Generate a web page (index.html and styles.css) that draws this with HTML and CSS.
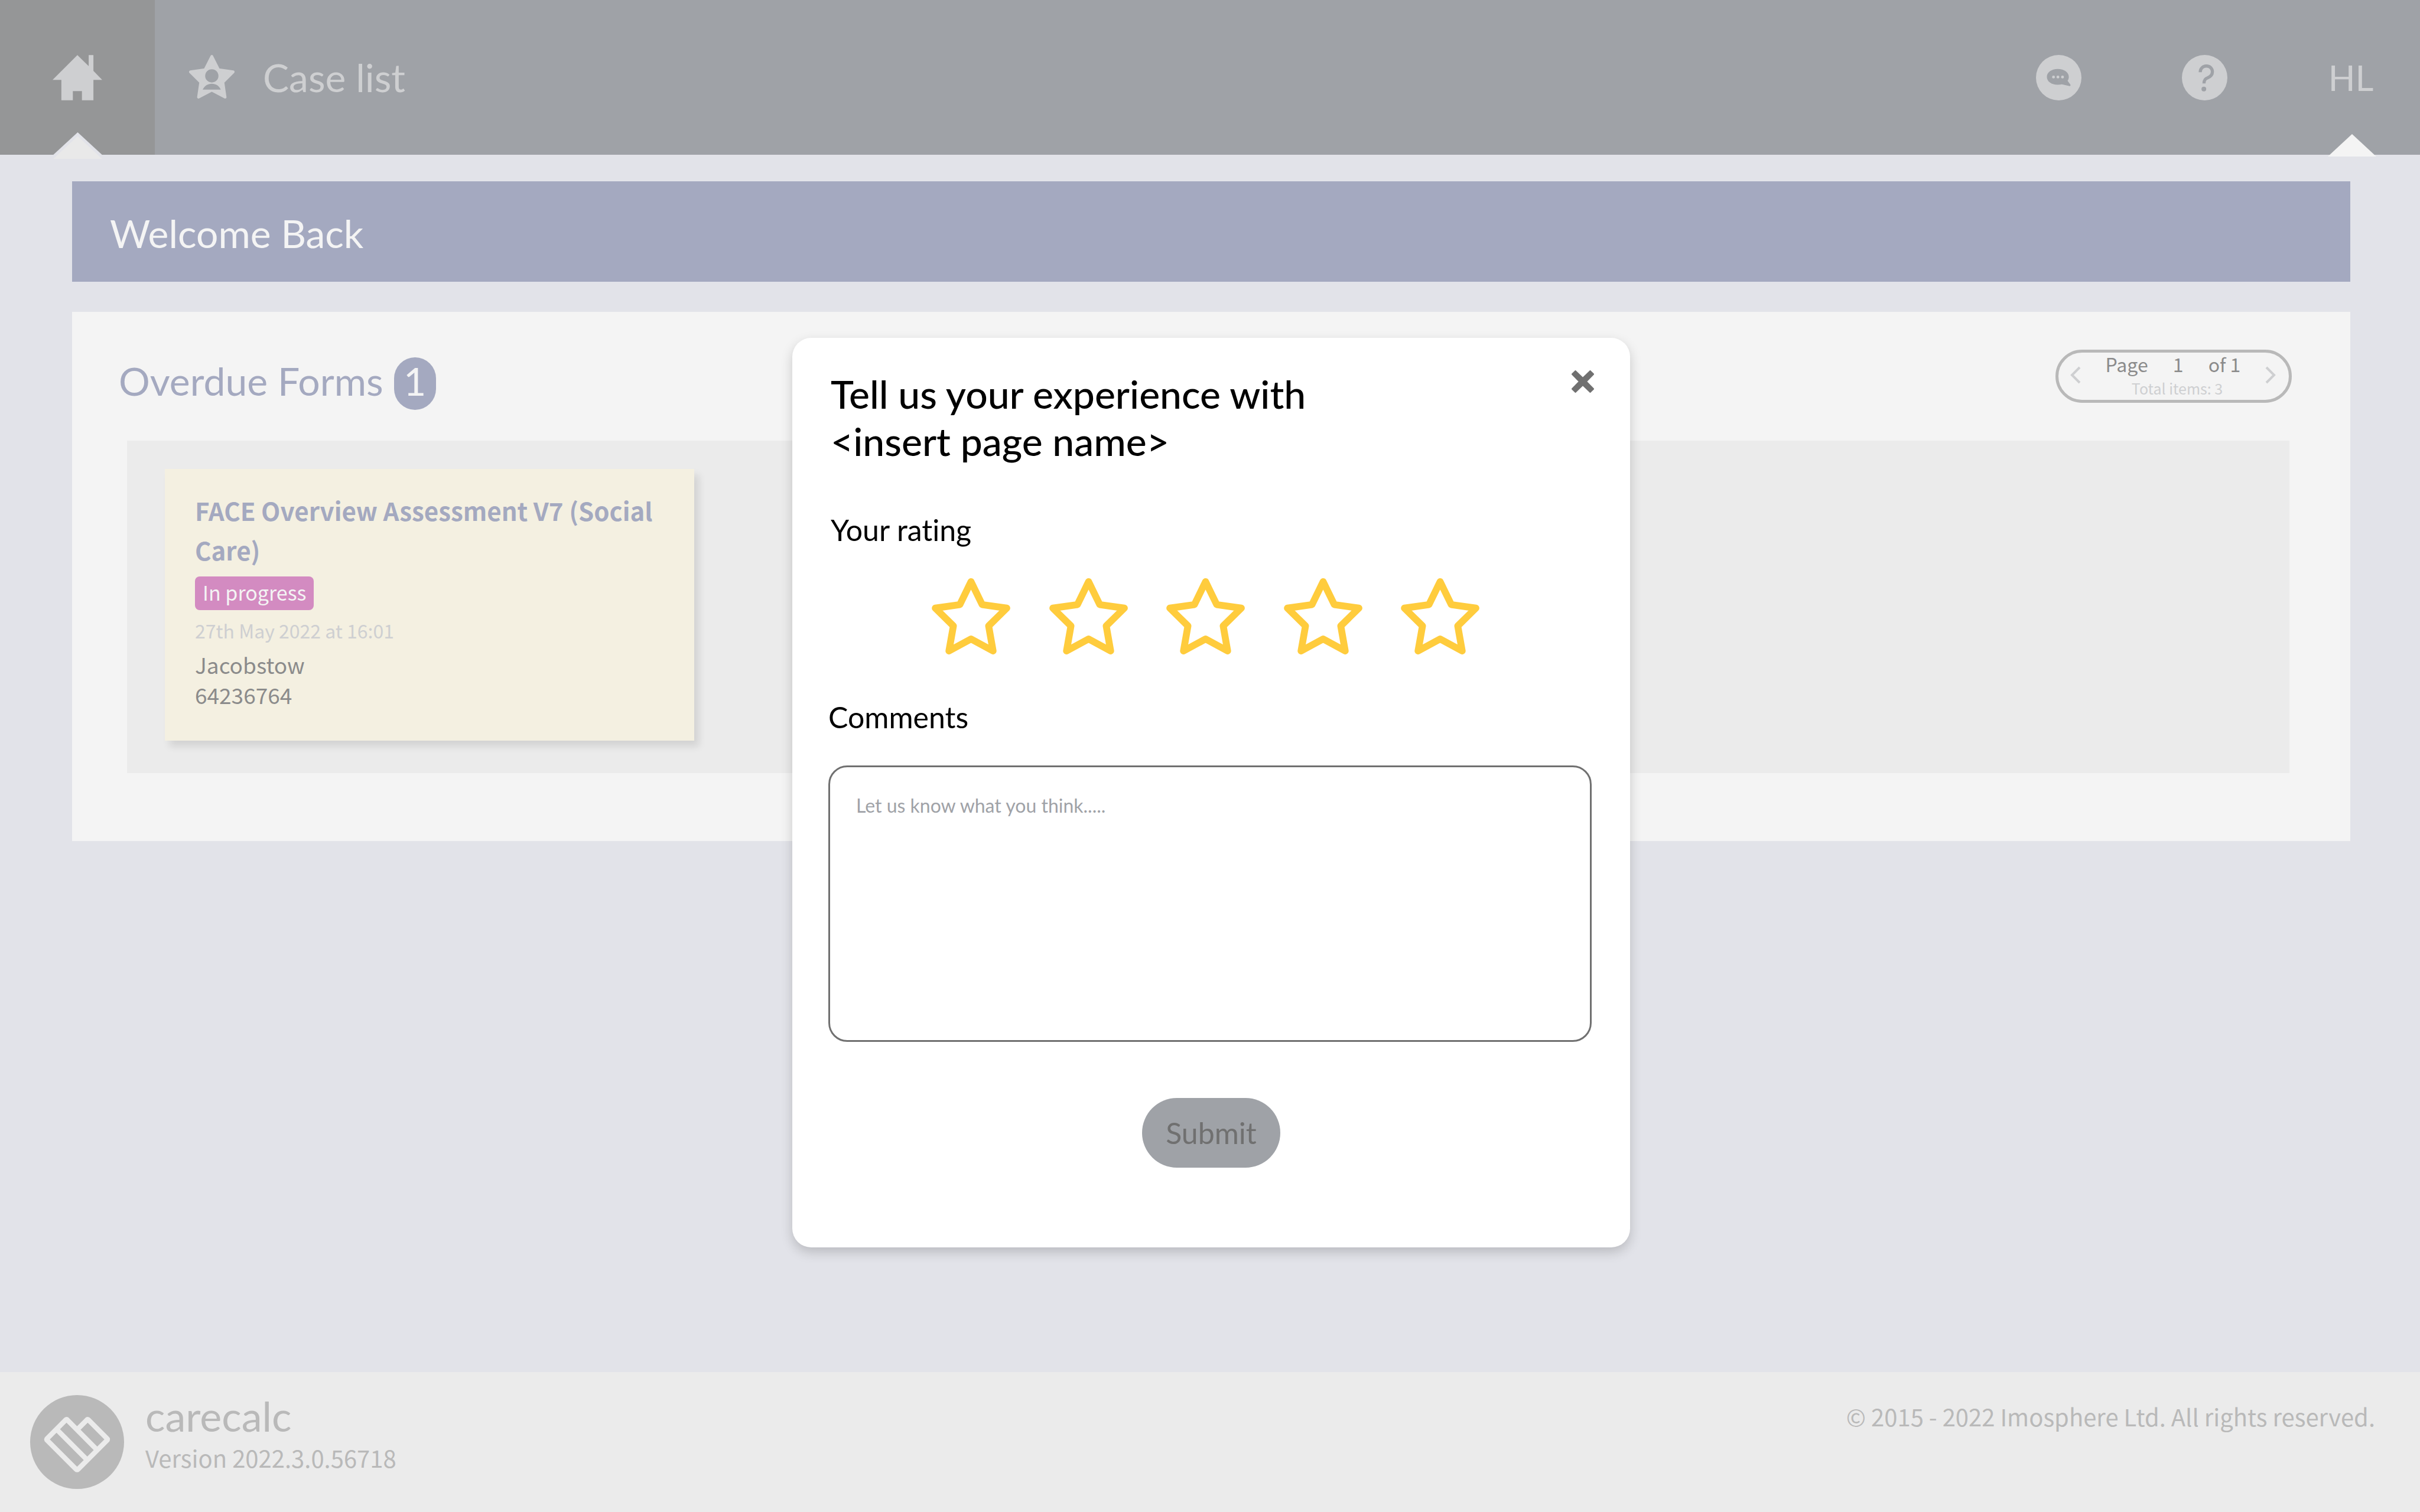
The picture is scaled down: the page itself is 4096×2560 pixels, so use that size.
FILE: index.html
```html
<!DOCTYPE html>
<html lang="en">
<head>
<meta charset="utf-8">
<title>carecalc</title>
<link rel="stylesheet" href="styles.css">
</head>
<body>
<div class="page">
  <header class="topbar">
    <a class="home" href="#" aria-label="Home">
      <svg class="home-icon" viewBox="94 78 316 288" aria-hidden="true"><path d="M94 236 252 78l72 71V78h30v101l56 57h-56v130h-73v-58h-58v58h-73V236z"/></svg>
      <svg class="home-pointer" viewBox="97 570 310 168" aria-hidden="true"><path fill="#e2e3e9" d="M252 570 407 713v25H97v-25z"/><path fill="#e9e9e9" d="M252 594 407 738H97z"/></svg>
    </a>
    <a class="case-list" href="#">
      <svg class="case-icon" viewBox="960 90 288 276" aria-hidden="true">
        <path class="case-star" d="M1104 99 1147 184 1239 197 1174 262 1188 357 1104 313 1020 357 1034 262 969 197 1061 184z"/>
        <circle class="cutout" cx="1104" cy="222" r="42"/>
        <path class="cutout" d="M1046 309C1058 285 1078 272 1104 272S1150 285 1161 309z"/>
      </svg>
      <span>Case list</span>
    </a>
    <nav class="tools">
      <button class="tool" type="button" aria-label="Messages">
        <svg class="tool-icon" viewBox="84 78 288 288" aria-hidden="true">
          <circle cx="228" cy="222" r="144"/>
          <path class="cutout" d="M222 167C262 167 292 188 292 217 292 226 289 235 284 242L302 266C304 271 302 276 297 275L248 264C240 266 231 267 222 267 183 267 153 246 153 217S183 167 222 167z"/>
          <circle cx="195" cy="218" r="9"/><circle cx="223" cy="218" r="9"/><circle cx="252" cy="218" r="9"/>
        </svg>
      </button>
      <button class="tool" type="button" aria-label="Help">
        <svg class="tool-icon" viewBox="1008 78 288 288" aria-hidden="true">
          <circle cx="1152" cy="222" r="144"/>
          <path class="help-hook" d="M1124 187C1124 164 1142 148 1163 148 1186 148 1201 164 1201 185 1201 206 1187 217 1171 223 1155 228 1148 238 1148 258"/>
          <circle class="cutout" cx="1147" cy="294" r="15"/>
        </svg>
      </button>
      <a class="user" href="#">HL
        <svg class="user-pointer" viewBox="0 0 82 38" aria-hidden="true"><path d="M41 0 82 38H0z"/></svg>
      </a>
    </nav>
  </header>

  <main class="content">
    <h1 class="banner">Welcome Back</h1>
    <section class="panel">
      <div class="panel-head">
        <h2 class="panel-title">Overdue Forms <span class="count">1</span></h2>
        <div class="pager">
          <button class="pager-step" type="button" aria-label="Previous page"><svg class="chevron" viewBox="0 0 18 30" aria-hidden="true"><path d="M16 2 3 15l13 13"/></svg></button>
          <div class="pager-info">
            <div class="pager-page">
              <label for="page-number">Page</label>
              <input class="page-number" id="page-number" type="text" value="1">
              <span>of 1</span>
            </div>
            <div class="pager-total">Total items: 3</div>
          </div>
          <button class="pager-step" type="button" aria-label="Next page"><svg class="chevron" viewBox="0 0 18 30" aria-hidden="true"><path d="M2 2l13 13L2 28"/></svg></button>
        </div>
      </div>
      <div class="forms">
        <article class="card">
          <h3 class="card-title">FACE Overview Assessment V7 (Social Care)</h3>
          <span class="status">In progress</span>
          <p class="card-date">27th May 2022 at 16:01</p>
          <p class="card-text">Jacobstow</p>
          <p class="card-text">64236764</p>
        </article>
      </div>
    </section>
  </main>

  <footer class="footer">
    <svg class="logo" viewBox="72 66 598 598" aria-hidden="true">
      <circle cx="371" cy="365" r="299" fill="#b9b9b9"/>
      <path class="logo-line" d="M491 408 310 226Q304 216 297 226L181 342Q173 348 181 355L364 538Q371 546 378 538L561 355Q568 348 561 342L445 226Q438 216 432 226L382 276M248 292 427 471"/>
    </svg>
    <div class="product">
      <div class="product-name">carecalc</div>
      <div class="footer-text">Version 2022.3.0.56718</div>
    </div>
    <div class="footer-text copyright">© 2015 - 2022 Imosphere Ltd. All rights reserved.</div>
  </footer>
</div>

<div class="overlay">
  <form class="dialog" role="dialog" aria-labelledby="dialog-title">
    <div class="dialog-head">
      <h2 class="dialog-title" id="dialog-title">Tell us your experience with<br>&lt;insert page name&gt;</h2>
      <button class="close" type="button" aria-label="Close"><svg class="close-icon" viewBox="78 72 140 140" aria-hidden="true"><path d="M102 77 148 122 194 77 213 96 168 142 213 188 194 207 148 162 102 207 83 188 128 142 83 96z"/></svg></button>
    </div>
    <fieldset class="rating">
      <legend class="field-label rating-label">Your rating</legend>
      <div class="stars">
        <label class="star"><input class="star-input" type="radio" name="rating" value="1" aria-label="1 star"><svg class="star-icon" viewBox="63 71 498 484" aria-hidden="true"><path d="M312 93 383 239 539 261 424 374 452 533 312 457 172 533 200 374 85 261 241 239z"/></svg></label>
        <label class="star"><input class="star-input" type="radio" name="rating" value="2" aria-label="2 stars"><svg class="star-icon" viewBox="63 71 498 484" aria-hidden="true"><path d="M312 93 383 239 539 261 424 374 452 533 312 457 172 533 200 374 85 261 241 239z"/></svg></label>
        <label class="star"><input class="star-input" type="radio" name="rating" value="3" aria-label="3 stars"><svg class="star-icon" viewBox="63 71 498 484" aria-hidden="true"><path d="M312 93 383 239 539 261 424 374 452 533 312 457 172 533 200 374 85 261 241 239z"/></svg></label>
        <label class="star"><input class="star-input" type="radio" name="rating" value="4" aria-label="4 stars"><svg class="star-icon" viewBox="63 71 498 484" aria-hidden="true"><path d="M312 93 383 239 539 261 424 374 452 533 312 457 172 533 200 374 85 261 241 239z"/></svg></label>
        <label class="star"><input class="star-input" type="radio" name="rating" value="5" aria-label="5 stars"><svg class="star-icon" viewBox="63 71 498 484" aria-hidden="true"><path d="M312 93 383 239 539 261 424 374 452 533 312 457 172 533 200 374 85 261 241 239z"/></svg></label>
      </div>
    </fieldset>
    <label class="field-label" for="comments">Comments</label>
    <textarea class="comments" id="comments" placeholder="Let us know what you think....."></textarea>
    <button class="submit" type="submit">Submit</button>
  </form>
</div>
</body>
</html>
```
FILE: styles.css
```css
* {
  box-sizing: border-box;
}

body {
  margin: 0;
  background: #e2e3e9;
  font-family: "Noto Sans CJK SC", "Noto Sans", sans-serif;
  font-variant-ligatures: none;
  color: #8b8b8b;
}

h1, h2, h3, p {
  margin: 0;
  font-weight: 400;
}

a {
  color: inherit;
  text-decoration: none;
}

button {
  margin: 0;
  padding: 0;
  border: 0;
  background: none;
  font: inherit;
  color: inherit;
}

svg {
  display: block;
}

.page {
  display: flex;
  flex-direction: column;
  min-height: 100vh;
}

/* Top bar */
.topbar {
  display: flex;
  height: 262px;
  background: #9fa2a7;
  color: #cecfd1;
  fill: #cecfd1;
  font-family: Lato, sans-serif;
  font-size: 66px;
}

.home {
  position: relative;
  display: flex;
  align-items: center;
  justify-content: center;
  width: 262px;
  background: #959697;
}

.home-icon {
  width: 84px;
  height: 77px;
}

.home-pointer {
  position: absolute;
  left: 90px;
  bottom: -7px;
  width: 83px;
  height: 45px;
}

.case-list {
  display: flex;
  align-items: center;
  gap: 48px;
  padding: 0 0 2px 58px;
}

.case-icon {
  width: 77px;
  height: 74px;
}

.case-star {
  stroke: #cecfd1;
  stroke-width: 18;
  stroke-linejoin: round;
}

.cutout {
  fill: #9fa2a7;
}

.tools {
  display: flex;
  align-items: center;
  margin-left: auto;
  padding-right: 74px;
}

.tool {
  margin-right: 170px;
}

.tool-icon {
  width: 77px;
  height: 77px;
}

.help-hook {
  fill: none;
  stroke: #9fa2a7;
  stroke-width: 20;
}

.user {
  position: relative;
  display: flex;
  align-items: center;
  justify-content: center;
  width: 82px;
  height: 100%;
  padding-right: 4px;
  font-size: 60px;
}

.user-pointer {
  position: absolute;
  left: 0;
  bottom: -3px;
  width: 82px;
  height: 38px;
  fill: #f4f4f4;
}

/* Main content */
.content {
  flex: 1;
  padding: 45px 118px 60px 122px;
}

.banner {
  padding: 48px 64px 42px;
  background: #a4a9c0;
  color: #f4f4f4;
  font-family: Lato, sans-serif;
  font-size: 66px;
  line-height: 80px;
}

.panel {
  margin-top: 51px;
  padding: 64px 103px 115px 93px;
  background: #f4f4f4;
}

.panel-head {
  display: flex;
  justify-content: space-between;
  margin: 0 -4px 52px -14px;
}

.panel-title {
  display: flex;
  gap: 18px;
  padding-top: 13px;
  color: #a4a9c0;
  font-family: Lato, sans-serif;
  font-size: 66px;
  line-height: 80px;
}

.count {
  width: 71px;
  height: 89px;
  border-radius: 36px;
  background: #a4a9c0;
  color: #f4f4f4;
  text-align: center;
}

.pager {
  display: flex;
  align-items: center;
  justify-content: space-between;
  width: 400px;
  height: 90px;
  padding: 0 22px 5px 20px;
  border: 5px solid #b9b9b9;
  border-radius: 45px;
}

.chevron {
  width: 18px;
  height: 30px;
  fill: none;
  stroke: #cecfd1;
  stroke-width: 4;
}

.pager-page {
  display: flex;
  font-size: 32px;
  line-height: 36px;
}

.page-number {
  width: 102px;
  height: 36px;
  padding: 0;
  border: 0;
  background: none;
  font: inherit;
  color: inherit;
  text-align: center;
}

.pager-total {
  padding: 8px 0 0 14px;
  color: #cecfd1;
  font-size: 25px;
  line-height: 30px;
  text-align: center;
}

.forms {
  padding: 48px 64px 55px;
  background: #ebebeb;
}

.card {
  width: 896px;
  padding: 36px 51px 52px;
  background: #f4f0e1;
  box-shadow: 8px 10px 12px rgba(0, 0, 0, 0.1);
}

.card-title {
  color: #a4a9c0;
  font-size: 42px;
  font-weight: 700;
  line-height: 67px;
}

.status {
  display: block;
  width: fit-content;
  margin-top: 12px;
  padding: 0 13px 3px;
  border-radius: 8px;
  background: #d38bc1;
  color: #f4f4f4;
  font-size: 34px;
  line-height: 54px;
}

.card-date {
  margin: 10px 0 9px;
  color: #cecfd1;
  font-size: 32px;
  line-height: 48px;
}

.card-text {
  font-size: 37px;
  line-height: 51px;
}

/* Footer */
.footer {
  display: flex;
  align-items: flex-start;
  padding: 39px 76px 39px 51px;
  background: #ebebeb;
  color: #b9b9b9;
}

.logo {
  width: 159px;
  height: 159px;
  margin-right: 36px;
}

.logo-line {
  fill: none;
  stroke: #ebebeb;
  stroke-width: 32;
  stroke-linejoin: round;
}

.product-name {
  font-family: Lato, sans-serif;
  font-size: 70px;
  line-height: 70px;
  margin-bottom: 8px;
}

.footer-text {
  font-size: 40px;
  line-height: 56px;
}

.copyright {
  margin: 8px 0 0 auto;
}

/* Feedback dialog */
.overlay {
  position: absolute;
  inset: 0;
  display: flex;
  align-items: flex-start;
  justify-content: center;
  padding: 572px 0 0 4px;
}

.dialog {
  display: flex;
  flex-direction: column;
  width: 1418px;
  max-width: 96%;
  padding: 55px 61px 135px;
  border-radius: 32px;
  background: #fff;
  box-shadow: 0 8px 20px rgba(0, 0, 0, 0.18);
  color: #000;
  font-family: Lato, sans-serif;
}

.dialog-head {
  display: flex;
  align-items: flex-start;
  justify-content: space-between;
  padding-left: 4px;
}

.dialog-title {
  font-size: 66px;
  font-weight: 500;
  line-height: 80px;
}

.close-icon {
  width: 38px;
  height: 38px;
  fill: #707070;
  stroke: #707070;
  stroke-width: 10;
  stroke-linejoin: round;
}

.rating {
  min-width: 0;
  margin: 82px 0 78px;
  padding: 0;
  border: 0;
}

.field-label {
  padding: 0;
  font-size: 50px;
  line-height: 56px;
}

.rating-label {
  padding-left: 4px;
}

.stars {
  display: flex;
  justify-content: space-between;
  padding: 54px 194px 0 175px;
}

.star {
  position: relative;
}

.star-input {
  position: absolute;
  inset: 0;
  margin: 0;
  opacity: 0;
}

.star-icon {
  width: 133px;
  height: 129px;
  fill: none;
  stroke: #ffcc3d;
  stroke-width: 44;
  stroke-linejoin: round;
}

.comments {
  display: block;
  height: 468px;
  margin: 54px 4px 95px 0;
  padding: 44px;
  border: 3px solid #707070;
  border-radius: 32px;
  background: #fff;
  font-family: Lato, sans-serif;
  font-size: 32px;
  line-height: 42px;
  resize: none;
}

.comments::placeholder {
  color: #9fa2a7;
  opacity: 1;
}

.submit {
  align-self: center;
  padding: 0 40px;
  border-radius: 59px;
  background: #9fa2a7;
  color: #707070;
  font-size: 50px;
  line-height: 118px;
}
```
